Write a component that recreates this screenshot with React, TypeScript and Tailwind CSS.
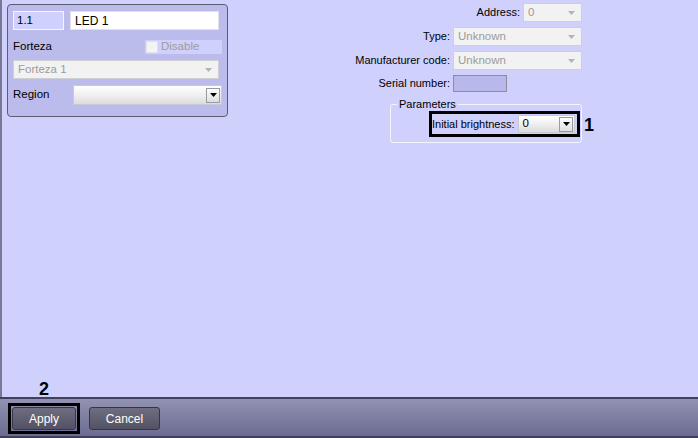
import React from "react";

const font = { fontFamily: '"Liberation Sans", Arial, sans-serif' };

function Arrow({ dark }: { dark?: boolean }) {
  return (
    <svg width="7" height="4" viewBox="0 0 7 4">
      <path d="M0 0h7L3.5 4z" fill={dark ? "#000" : "#b4b4b4"} />
    </svg>
  );
}

function DisabledSelect({ value, className }: { value: string; className: string }) {
  return (
    <div
      className={`flex items-center justify-between bg-[#f2f2f2] border border-[#cfcfd8] text-[#9c9c9c] pl-[4px] pr-[6px] ${className}`}
    >
      <span>{value}</span>
      <Arrow />
    </div>
  );
}

function ActiveSelect({ value, className }: { value: string; className: string }) {
  return (
    <div
      className={`flex items-center justify-between border border-[#c9c9d4] bg-gradient-to-b from-[#ffffff] via-[#f0f0f0] to-[#dcdcdc] pl-[4px] pr-[1px] ${className}`}
    >
      <span>{value}</span>
      <div className="w-[14px] h-[15px] flex items-center justify-center border border-[#9a9aa4] bg-gradient-to-b from-[#ffffff] to-[#dedede]">
        <Arrow dark />
      </div>
    </div>
  );
}

function Row({ label, children }: { label: string; children: React.ReactNode }) {
  return (
    <div className="flex items-center justify-end gap-[3px] whitespace-nowrap">
      <span>{label}</span>
      {children}
    </div>
  );
}

export default function App() {
  return (
    <div
      className="w-[698px] h-[438px] flex flex-col bg-[#d0d0fc] text-[11px] text-black overflow-hidden"
      style={font}
    >
      <div className="relative flex-1 flex border-l-2 border-[#787894]">
        {/* left device panel */}
        <div className="ml-[5px] mt-[4px] w-[221px] h-[113px] border border-[#5c5c74] rounded-[4px] bg-[#bcbcec] px-[5px] pt-[6px] flex flex-col text-[11.5px]">
          <div className="flex gap-[6px]">
            <div className="w-[51px] h-[19px] border border-[#f4f4ff] bg-[#d0d0fc] flex items-center pl-[3px]">1.1</div>
            <div className="w-[149px] h-[19px] border border-[#e0e0ea] bg-white flex items-center pl-[4px] text-[12px]">LED 1</div>
          </div>
          <div className="flex items-center justify-between mt-[10px] h-[14px]">
            <span>Forteza</span>
            <div className="w-[77px] h-[14px] bg-[#d0d0fc] flex items-center gap-[3px] pl-[1px] text-[#9c9c9c]">
              <div className="w-[12px] h-[12px] bg-[#f4f4f4] border border-[#e0e0e8]" />
              <span>Disable</span>
            </div>
          </div>
          <DisabledSelect value="Forteza 1" className="mt-[6px] w-[206px] h-[19px]" />
          <div className="flex items-center justify-between mt-[6px]">
            <span>Region</span>
            <ActiveSelect value="" className="w-[149px] h-[20px]" />
          </div>
        </div>

        <div className="flex-1" />

        {/* right properties */}
        <div className="mr-[116px] pt-[3px] flex flex-col items-end gap-[5px] text-[11px]">
          <Row label="Address:">
            <DisabledSelect value="0" className="w-[59px] h-[19px] text-[11.5px]" />
          </Row>
          <Row label="Type:">
            <DisabledSelect value="Unknown" className="w-[129px] h-[19px] text-[11.5px]" />
          </Row>
          <Row label="Manufacturer code:">
            <DisabledSelect value="Unknown" className="w-[129px] h-[19px] text-[11.5px]" />
          </Row>
          <Row label="Serial number:">
            <div className="w-[129px] h-[17px]">
              <div className="w-[54px] h-[17px] border border-[#8c8c9c] bg-[#b8b8ea]" />
            </div>
          </Row>

          <div className="relative mt-[7px] w-[192px] h-[39px] border border-[#f4f4ff] rounded-[3px] flex justify-end pt-[6px] pr-[1px]">
            <span className="absolute left-[6px] top-[-8px] px-[2px] bg-[#d0d0fc] leading-[14px]">Parameters</span>
            <div className="w-[151px] h-[26px] border-[3px] border-black flex items-center justify-end gap-[3px] pr-[2px] whitespace-nowrap">
              <span>Initial brightness:</span>
              <ActiveSelect value="0" className="w-[58px] h-[18px] text-[11.5px]" />
            </div>
            <span className="absolute left-[193px] top-[11px] text-[18px] font-bold leading-[18px]">1</span>
          </div>
        </div>

        <span className="absolute left-[37px] top-[380px] text-[18px] font-bold leading-[18px]">2</span>
      </div>

      {/* bottom bar */}
      <div className="h-[41px] border-t-2 border-b-2 border-[#40405a] bg-gradient-to-b from-[#9292b2] to-[#6c6c92] flex items-start gap-[9px] pl-[8px] pt-[4px]">
        <div className="w-[72px] h-[31px] border-[3px] border-black p-[1px]">
          <button className="w-full h-full rounded-[3px] border border-[#34344a] bg-gradient-to-b from-[#6e6e80] to-[#525264] text-white text-[12px]">
            Apply
          </button>
        </div>
        <button className="mt-[4px] w-[71px] h-[23px] rounded-[3px] border border-[#34344a] bg-gradient-to-b from-[#6e6e80] to-[#525264] text-white text-[12px]">
          Cancel
        </button>
      </div>
    </div>
  );
}
